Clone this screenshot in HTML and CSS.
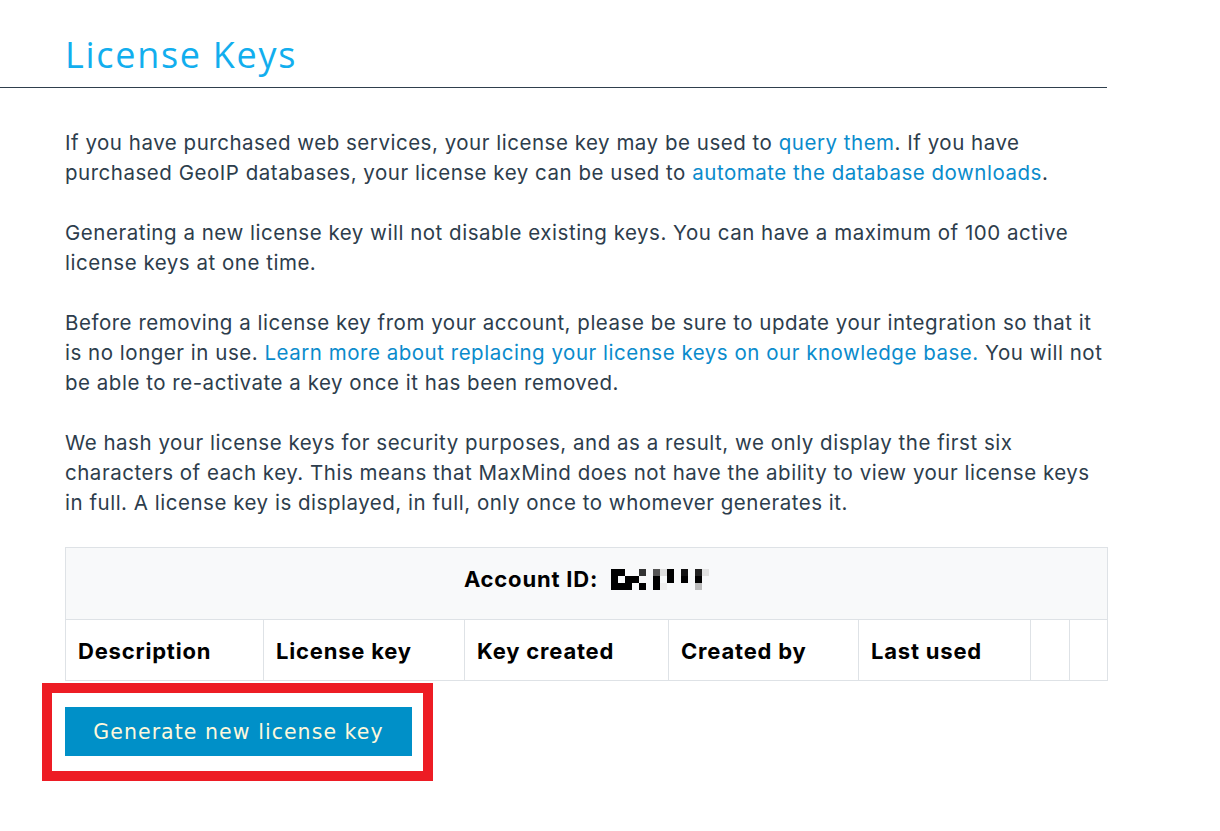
FILE: index.html
```html
<!DOCTYPE html>
<html lang="en">
<head>
<meta charset="utf-8">
<title>License Keys</title>
<link rel="stylesheet" href="styles.css">
</head>
<body>
<header class="page-header">
  <h1 class="title">License Keys</h1>
</header>
<main class="content">
  <p>If you have purchased web services, your license key may be used to <a href="#">query them</a>. If you have<br>purchased GeoIP databases, your license key can be used to <a href="#">automate the database downloads</a>.</p>
  <p>Generating a new license key will not disable existing keys. You can have a maximum of 100 active<br>license keys at one time.</p>
  <p>Before removing a license key from your account, please be sure to update your integration so that it<br>is no longer in use. <a href="#">Learn more about replacing your license keys on our knowledge base.</a> You will not<br>be able to re-activate a key once it has been removed.</p>
  <p class="last">We hash your license keys for security purposes, and as a result, we only display the first six<br>characters of each key. This means that MaxMind does not have the ability to view your license keys<br>in full. A license key is displayed, in full, only once to whomever generates it.</p>

  <table class="keys">
    <colgroup>
      <col class="c1"><col class="c2"><col class="c3"><col class="c4"><col class="c5"><col class="c6"><col class="c7">
    </colgroup>
    <thead>
      <tr class="account-row">
        <th colspan="7"><span class="account-label">Account ID:</span>
          <svg class="pixels" width="98" height="21" viewBox="0 0 14 3" shape-rendering="crispEdges">
            <rect x="0" y="0" width="2" height="1" fill="#000"/>
            <rect x="4" y="0" width="1" height="1" fill="#333"/>
            <rect x="6" y="0" width="1" height="1" fill="#555"/>
            <rect x="7" y="0" width="1" height="1" fill="#ddd"/>
            <rect x="8" y="0" width="1" height="1" fill="#000"/>
            <rect x="10" y="0" width="1" height="1" fill="#111"/>
            <rect x="12" y="0" width="1" height="1" fill="#222"/>
            <rect x="13" y="0" width="1" height="1" fill="#e2e2e2"/>
            <rect x="0" y="1" width="1" height="1" fill="#000"/>
            <rect x="2" y="1" width="2" height="1" fill="#000"/>
            <rect x="6" y="1" width="1" height="1" fill="#000"/>
            <rect x="8" y="1" width="1" height="1" fill="#000"/>
            <rect x="10" y="1" width="1" height="1" fill="#000"/>
            <rect x="12" y="1" width="1" height="1" fill="#000"/>
            <rect x="0" y="2" width="3" height="1" fill="#000"/>
            <rect x="4" y="2" width="1" height="1" fill="#000"/>
            <rect x="6" y="2" width="1" height="1" fill="#000"/>
            <rect x="7" y="2" width="1" height="1" fill="#eee"/>
            <rect x="12" y="2" width="1" height="1" fill="#bbb"/>
          </svg>
        </th>
      </tr>
      <tr class="head-row">
        <th>Description</th>
        <th>License key</th>
        <th>Key created</th>
        <th>Created by</th>
        <th>Last used</th>
        <th></th>
        <th></th>
      </tr>
    </thead>
  </table>

  <div class="actions">
    <button class="btn-generate" type="button">Generate new license key</button>
    <div class="highlight"></div>
  </div>
</main>
</body>
</html>
```

FILE: styles.css
```css
html, body {
  margin: 0;
  padding: 0;
  background: #fff;
}

body {
  font-family: Inter, "Liberation Sans", sans-serif;
  color: #2d3d4c;
  min-height: 831px;
}

.page-header {
  width: 1042px;
  padding: 33px 0 0 65px;
  height: 54px;
  border-bottom: 1px solid #2f3f4d;
}

.title {
  margin: 0;
  font-family: "Open Sans", sans-serif;
  font-weight: 400;
  font-size: 36px;
  line-height: 44px;
  letter-spacing: 1.7px;
  color: #12aeee;
}

.content {
  width: 1042px;
  padding: 40px 0 60px 65px;
  position: relative;
}

.content p {
  margin: 0 0 30px;
  font-size: 20.5px;
  line-height: 30px;
  letter-spacing: 0.52px;
  white-space: nowrap;
}

.content p.last {
  margin-bottom: 29px;
}

.content a {
  color: #0a8bcc;
  text-decoration: none;
}

.keys {
  width: 1042px;
  border-collapse: collapse;
  table-layout: fixed;
  margin: 0;
}

.c1 { width: 198px; }
.c2 { width: 201px; }
.c3 { width: 204px; }
.c4 { width: 190px; }
.c5 { width: 172px; }
.c6 { width: 39px; }
.c7 { width: 38px; }

.keys th {
  border: 1px solid #dee2e6;
  color: #000;
  font-weight: 700;
  font-size: 22px;
  letter-spacing: 0.8px;
  text-align: left;
  padding: 0 12px;
}

.account-row th {
  background: #f8f9fa;
  height: 72px;
  text-align: center;
  padding: 0 0 11px;
  box-sizing: border-box;
}

.account-label {
  vertical-align: middle;
}

.pixels {
  vertical-align: middle;
  margin-left: 7px;
}

.head-row th {
  height: 61px;
  padding: 2px 12px 0;
  box-sizing: border-box;
}

.actions {
  padding-top: 26px;
  position: relative;
}

.btn-generate {
  display: block;
  width: 347px;
  height: 49px;
  border: 0;
  background: #0090c8;
  color: #fdf8dc;
  font-family: "DejaVu Sans", sans-serif;
  font-size: 20.5px;
  font-weight: 400;
  letter-spacing: 1.05px;
  cursor: pointer;
  padding: 0;
}

.highlight {
  position: absolute;
  left: -23px;
  top: 2px;
  width: 391px;
  height: 98px;
  box-sizing: border-box;
  border: 10px solid #ed1c24;
  pointer-events: none;
}
```
